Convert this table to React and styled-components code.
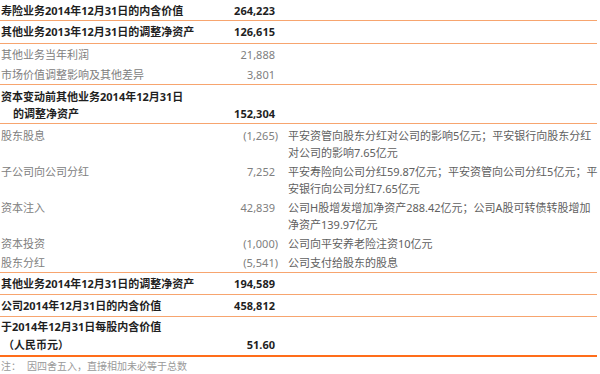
import styled, { createGlobalStyle } from "styled-components";

const GlobalStyle = createGlobalStyle`
  body {
    margin: 0;
    background: #fff;
    font-family: "Noto Sans", "Noto Sans CJK SC", sans-serif;
  }
`;

const capitalRows = [
  {
    label: "股东股息",
    value: "(1,265)",
    neg: true,
    note: ["平安资管向股东分红对公司的影响5亿元；平安银行向股东分红", "对公司的影响7.65亿元"],
  },
  {
    label: "子公司向公司分红",
    value: "7,252",
    note: ["平安寿险向公司分红59.87亿元；平安资管向公司分红5亿元；平", "安银行向公司分红7.65亿元"],
  },
  {
    label: "资本注入",
    value: "42,839",
    note: ["公司H股增发增加净资产288.42亿元；公司A股可转债转股增加", "净资产139.97亿元"],
  },
  { label: "资本投资", value: "(1,000)", neg: true, note: ["公司向平安养老险注资10亿元"] },
  { label: "股东分红", value: "(5,541)", neg: true, note: ["公司支付给股东的股息"] },
];

export default function App() {
  return (
    <>
      <GlobalStyle />
      <Table>
        <Row $bold $line $pad="2px 0 1px">
          <Label>寿险业务2014年12月31日的内含价值</Label>
          <Num>264,223</Num>
        </Row>
        <Row $bold $line $pad="2px 0 3px">
          <Label>其他业务2013年12月31日的调整净资产</Label>
          <Num>126,615</Num>
        </Row>

        <Group $line>
          <Row $pad="2px 0 1px">
            <Label>其他业务当年利润</Label>
            <Num>21,888</Num>
          </Row>
          <Row $pad="2px 0 1px">
            <Label>市场价值调整影响及其他差异</Label>
            <Num>3,801</Num>
          </Row>
        </Group>

        <Row $bold $line $pad="3px 0 1px">
          <Label>
            资本变动前其他业务2014年12月31日
            <Indent>的调整净资产</Indent>
          </Label>
          <Num $end>152,304</Num>
        </Row>

        <Group $line $top="2px">
          {capitalRows.map((r) => (
            <Row key={r.label} $pad="1px 0">
              <Label>{r.label}</Label>
              <Num $neg={r.neg}>{r.value}</Num>
              <Note>
                {r.note.map((line) => (
                  <NoteLine key={line}>{line}</NoteLine>
                ))}
              </Note>
            </Row>
          ))}
        </Group>

        <Row $bold $line $pad="2px 0">
          <Label>其他业务2014年12月31日的调整净资产</Label>
          <Num>194,589</Num>
        </Row>
        <Row $bold $line $pad="2px 0">
          <Label>公司2014年12月31日的内含价值</Label>
          <Num>458,812</Num>
        </Row>
        <Row $bold $strong $pad="1px 0" $lh="18px">
          <Label>
            于2014年12月31日每股内含价值
            <Indent $w="2px">（人民币元）</Indent>
          </Label>
          <Num $end>51.60</Num>
        </Row>

        <Footnote>
          <span>注：</span>
          <span>因四舍五入，直接相加未必等于总数</span>
        </Footnote>
      </Table>
    </>
  );
}

const Table = styled.div`
  width: 597px;
  display: flex;
  flex-direction: column;
`;

const Group = styled.div`
  display: flex;
  flex-direction: column;
  padding-top: ${(p) => p.$top || "0"};
  border-bottom: ${(p) => (p.$line ? "1px solid #f7a56f" : "none")};
`;

const Row = styled.div`
  display: grid;
  grid-template-columns: minmax(0, 1fr) 60px 322px;
  align-items: start;
  padding: ${(p) => p.$pad || "2px 0"};
  font-size: 11px;
  line-height: ${(p) => p.$lh || "17px"};
  font-weight: ${(p) => (p.$bold ? 700 : 400)};
  color: ${(p) => (p.$bold ? "#1f1f1f" : "#808080")};
  border-bottom: ${(p) =>
    p.$strong ? "2px solid #ff6d1a" : p.$line ? "1px solid #f7a56f" : "none"};
`;

const Label = styled.div`
  white-space: nowrap;
  display: flex;
  flex-direction: column;
  padding-left: 1px;
`;

const Indent = styled.span`
  padding-left: ${(p) => p.$w || "12px"};
`;

const Num = styled.div`
  align-self: ${(p) => (p.$end ? "end" : "start")};
  text-align: right;
  white-space: nowrap;
  margin-right: ${(p) => (p.$neg ? "-3px" : "0")};
`;

const Note = styled.div`
  padding-left: 13px;
  color: #606060;
`;

const NoteLine = styled.span`
  display: block;
  white-space: nowrap;
`;

const Footnote = styled.div`
  display: flex;
  gap: 6px;
  padding: 2px 0 0 1px;
  font-size: 10px;
  line-height: 14px;
  color: #9a9a9a;
`;
